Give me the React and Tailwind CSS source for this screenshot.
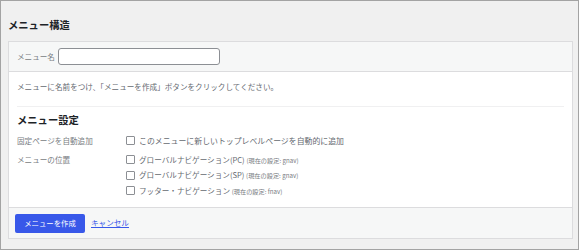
const font = { fontFamily: '"Noto Sans CJK JP", "Noto Sans", sans-serif' };

const locations = [
  { label: "グローバルナビゲーション(PC)", note: "(現在の設定: gnav)" },
  { label: "グローバルナビゲーション(SP)", note: "(現在の設定: gnav)" },
  { label: "フッター・ナビゲーション", note: "(現在の設定: fnav)" },
];

const Box = () => (
  <span className="inline-block w-[9px] h-[9px] shrink-0 rounded-[1px] border border-[#8c8f94] bg-white" />
);

const App = () => {
  return (
    <div
      className="w-[579px] h-[250px] border border-[#a3a3a3] bg-[#f0f0f0] text-[#3c434a]"
      style={font}
    >
      <h1 className="pl-[7px] pt-[19px] h-[40px] text-[10.3px] font-bold text-[#1d2327] leading-none">
        メニュー構造
      </h1>

      <div className="ml-[7px] w-[565px] h-[198px] border border-[#dcdcde] bg-white flex flex-col">
        {/* menu name bar */}
        <div className="h-[30px] bg-[#f6f7f7] border-b border-[#dcdcde] flex items-center pl-[8px] gap-[3px]">
          <span className="text-[7.6px] text-[#787c82]">メニュー名</span>
          <span className="w-[162px] h-[17px] rounded-[3px] border border-[#8c8f94] bg-white" />
        </div>

        {/* body */}
        <div className="flex-1 px-[8px]">
          <p className="pt-[11px] text-[7.6px] leading-none text-[#646970]">
            メニューに名前をつけ、「メニューを作成」ボタンをクリックしてください。
          </p>
          <div className="mt-[15px] border-t border-[#f0f0f1]" />
          <h2 className="mt-[8px] text-[10.3px] font-bold text-[#1d2327] leading-none">
            メニュー設定
          </h2>

          <div className="mt-[10px] flex">
            <span className="w-[109px] text-[7.6px] text-[#787c82] leading-[11px]">固定ページを自動追加</span>
            <div className="flex items-center gap-[4px]">
              <Box />
              <span className="text-[7.9px] leading-[11px] text-[#646970]">
                このメニューに新しいトップレベルページを自動的に追加
              </span>
            </div>
          </div>

          <div className="mt-[8px] flex">
            <span className="w-[109px] text-[7.6px] text-[#787c82] leading-[11px]">メニューの位置</span>
            <div className="flex flex-col gap-[3.5px]">
              {locations.map((l) => (
                <div key={l.label} className="flex items-center gap-[4px]">
                  <Box />
                  <span className="text-[7.6px] leading-[11px] text-[#646970]">
                    {l.label}{" "}
                    <span className="text-[6.2px] text-[#787c82]">{l.note}</span>
                  </span>
                </div>
              ))}
            </div>
          </div>
        </div>

        {/* footer */}
        <div className="h-[31px] bg-[#f6f7f7] border-t border-[#dcdcde] flex items-center pl-[6px] gap-[6px]">
          <button className="h-[19px] w-[70px] rounded-[2px] bg-[#3858e9] text-white text-[7.4px] leading-none">
            メニューを作成
          </button>
          <a href="#" className="text-[7.6px] text-[#3858e9] underline">
            キャンセル
          </a>
        </div>
      </div>
    </div>
  );
};

export default App;
